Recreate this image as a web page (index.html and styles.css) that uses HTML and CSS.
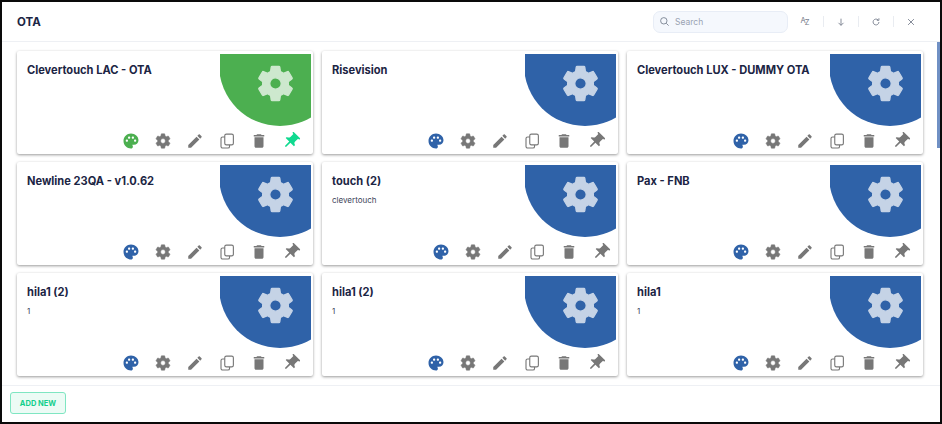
FILE: index.html
```html
<!DOCTYPE html>
<html lang="en">
<head>
  <meta charset="UTF-8" />
  <title>OTA</title>
  <link rel="stylesheet" href="styles.css">
</head>
<body>

<svg class="sprite" xmlns="http://www.w3.org/2000/svg">
  <symbol id="i-palette" viewBox="0 0 24 24"><path fill-rule="evenodd" d="M12 2C6.49 2 2 6.49 2 12s4.49 10 10 10c1.38 0 2.5-1.12 2.5-2.5 0-.61-.23-1.2-.64-1.67-.08-.1-.13-.21-.13-.33 0-.28.22-.5.5-.5H16c3.31 0 6-2.69 6-6 0-4.96-4.49-9-10-9zm5.5 11c-.83 0-1.5-.67-1.5-1.5s.67-1.5 1.5-1.5 1.5.67 1.5 1.5-.67 1.5-1.5 1.5zm-3-4c-.83 0-1.5-.67-1.5-1.5S13.67 6 14.5 6s1.5.67 1.5 1.5S15.33 9 14.5 9zM5 11.5c0-.83.67-1.5 1.5-1.5s1.5.67 1.5 1.5S7.33 13 6.5 13 5 12.33 5 11.5zm6-4c0 .83-.67 1.5-1.5 1.5S8 8.33 8 7.5 8.67 6 9.5 6s1.5.67 1.5 1.5z"/></symbol>
  <symbol id="i-gear" viewBox="0 0 24 24"><path stroke="currentColor" stroke-width=".7" stroke-linejoin="round" d="M19.14 12.94c.04-.3.06-.61.06-.94 0-.32-.02-.64-.07-.94l2.03-1.58c.18-.14.23-.41.12-.61l-1.92-3.32c-.12-.22-.37-.29-.59-.22l-2.39.96c-.5-.38-1.03-.7-1.62-.94l-.36-2.54c-.04-.24-.24-.41-.48-.41h-3.84c-.24 0-.43.17-.47.41l-.36 2.54c-.59.24-1.13.57-1.62.94l-2.39-.96c-.22-.08-.47 0-.59.22L2.74 8.87c-.12.21-.08.47.12.61l2.03 1.58c-.05.3-.09.63-.09.94s.02.64.07.94l-2.03 1.58c-.18.14-.23.41-.12.61l1.92 3.32c.12.22.37.29.59.22l2.39-.96c.5.38 1.03.7 1.62.94l.36 2.54c.05.24.24.41.48.41h3.84c.24 0 .44-.17.47-.41l.36-2.54c.59-.24 1.13-.56 1.62-.94l2.39.96c.22.08.47 0 .59-.22l1.92-3.32c.12-.22.07-.47-.12-.61l-2.01-1.58zM12 15.2a3.2 3.2 0 1 1 0-6.4 3.2 3.2 0 0 1 0 6.4z"/></symbol>
  <symbol id="i-edit" viewBox="0 0 24 24"><path d="M3 17.25V21h3.75L17.81 9.94l-3.75-3.75L3 17.25zM20.71 7.04c.39-.39.39-1.02 0-1.41l-2.34-2.34c-.39-.39-1.02-.39-1.41 0l-1.83 1.83 3.75 3.75 1.83-1.83z"/></symbol>
  <symbol id="i-copy" viewBox="0 0 24 24"><g fill="none" stroke="currentColor" stroke-width="1.5"><rect x="9" y="2.8" width="11.5" height="14.4" rx="2.2"/><path d="M9 6.6H6.2a2.2 2.2 0 0 0-2.2 2.2v10.4a2.2 2.2 0 0 0 2.2 2.2h7a2.2 2.2 0 0 0 2.2-2.2v-2"/></g></symbol>
  <symbol id="i-trash" viewBox="0 0 24 24"><path d="M6 19c0 1.1.9 2 2 2h8c1.1 0 2-.9 2-2V7H6v12zM19 4h-3.5l-1-1h-5l-1 1H5v2h14V4z"/></symbol>
  <symbol id="i-pin" viewBox="0 0 24 24"><path transform="rotate(45 12 12)" d="M16 9V4h1c.55 0 1-.45 1-1s-.45-1-1-1H7c-.55 0-1 .45-1 1s.45 1 1 1h1v5c0 1.66-1.34 3-3 3v2h5.97v7l1 1 1-1v-7H19v-2c-1.66 0-3-1.34-3-3z"/></symbol>
</svg>

<div class="window">
  <header class="topbar">
    <h1>OTA</h1>
    <div class="search">
      <svg viewBox="0 0 24 24" fill="none" stroke="currentColor" stroke-width="1.8"><circle cx="10.5" cy="10.5" r="7"/><path d="M16 16l5 5"/></svg>
      <span>Search</span>
    </div>
    <div class="tools">
      <span class="tool sort-az"><b>A</b><i>Z</i></span>
      <span class="tool"><svg viewBox="0 0 24 24" fill="none" stroke="currentColor" stroke-width="2"><path d="M12 4v16M6 14l6 6 6-6"/></svg></span>
      <span class="tool"><svg viewBox="0 0 24 24" fill="none" stroke="currentColor" stroke-width="2"><path d="M19 12a7 7 0 1 1-2.2-5.1M19 3v5h-5"/></svg></span>
      <span class="tool"><svg viewBox="0 0 24 24" fill="none" stroke="currentColor" stroke-width="2"><path d="M5 5l14 14M19 5L5 19"/></svg></span>
    </div>
  </header>

  <main class="list">
    <div class="scroll-thumb"></div>
    <div class="grid">

      <article class="card green">
        <h2>Clevertouch LAC - OTA</h2>
        <div class="corner"><svg><use href="#i-gear"/></svg></div>
        <div class="actions">
          <svg class="palette"><use href="#i-palette"/></svg>
          <svg><use href="#i-gear"/></svg>
          <svg><use href="#i-edit"/></svg>
          <svg><use href="#i-copy"/></svg>
          <svg><use href="#i-trash"/></svg>
          <svg class="pin pinned"><use href="#i-pin"/></svg>
        </div>
      </article>

      <article class="card">
        <h2>Risevision</h2>
        <div class="corner"><svg><use href="#i-gear"/></svg></div>
        <div class="actions">
          <svg class="palette"><use href="#i-palette"/></svg>
          <svg><use href="#i-gear"/></svg>
          <svg><use href="#i-edit"/></svg>
          <svg><use href="#i-copy"/></svg>
          <svg><use href="#i-trash"/></svg>
          <svg class="pin"><use href="#i-pin"/></svg>
        </div>
      </article>

      <article class="card">
        <h2>Clevertouch LUX - DUMMY OTA</h2>
        <div class="corner"><svg><use href="#i-gear"/></svg></div>
        <div class="actions">
          <svg class="palette"><use href="#i-palette"/></svg>
          <svg><use href="#i-gear"/></svg>
          <svg><use href="#i-edit"/></svg>
          <svg><use href="#i-copy"/></svg>
          <svg><use href="#i-trash"/></svg>
          <svg class="pin"><use href="#i-pin"/></svg>
        </div>
      </article>

      <article class="card">
        <h2>Newline 23QA - v1.0.62</h2>
        <div class="corner"><svg><use href="#i-gear"/></svg></div>
        <div class="actions">
          <svg class="palette"><use href="#i-palette"/></svg>
          <svg><use href="#i-gear"/></svg>
          <svg><use href="#i-edit"/></svg>
          <svg><use href="#i-copy"/></svg>
          <svg><use href="#i-trash"/></svg>
          <svg class="pin"><use href="#i-pin"/></svg>
        </div>
      </article>

      <article class="card">
        <h2>touch (2)</h2>
        <p>clevertouch</p>
        <div class="corner"><svg><use href="#i-gear"/></svg></div>
        <div class="actions shifted">
          <svg class="palette"><use href="#i-palette"/></svg>
          <svg><use href="#i-gear"/></svg>
          <svg><use href="#i-edit"/></svg>
          <svg><use href="#i-copy"/></svg>
          <svg><use href="#i-trash"/></svg>
          <svg class="pin"><use href="#i-pin"/></svg>
        </div>
      </article>

      <article class="card">
        <h2>Pax - FNB</h2>
        <div class="corner"><svg><use href="#i-gear"/></svg></div>
        <div class="actions">
          <svg class="palette"><use href="#i-palette"/></svg>
          <svg><use href="#i-gear"/></svg>
          <svg><use href="#i-edit"/></svg>
          <svg><use href="#i-copy"/></svg>
          <svg><use href="#i-trash"/></svg>
          <svg class="pin"><use href="#i-pin"/></svg>
        </div>
      </article>

      <article class="card">
        <h2>hila1 (2)</h2>
        <p>1</p>
        <div class="corner"><svg><use href="#i-gear"/></svg></div>
        <div class="actions">
          <svg class="palette"><use href="#i-palette"/></svg>
          <svg><use href="#i-gear"/></svg>
          <svg><use href="#i-edit"/></svg>
          <svg><use href="#i-copy"/></svg>
          <svg><use href="#i-trash"/></svg>
          <svg class="pin"><use href="#i-pin"/></svg>
        </div>
      </article>

      <article class="card">
        <h2>hila1 (2)</h2>
        <p>1</p>
        <div class="corner"><svg><use href="#i-gear"/></svg></div>
        <div class="actions">
          <svg class="palette"><use href="#i-palette"/></svg>
          <svg><use href="#i-gear"/></svg>
          <svg><use href="#i-edit"/></svg>
          <svg><use href="#i-copy"/></svg>
          <svg><use href="#i-trash"/></svg>
          <svg class="pin"><use href="#i-pin"/></svg>
        </div>
      </article>

      <article class="card">
        <h2>hila1</h2>
        <p>1</p>
        <div class="corner"><svg><use href="#i-gear"/></svg></div>
        <div class="actions">
          <svg class="palette"><use href="#i-palette"/></svg>
          <svg><use href="#i-gear"/></svg>
          <svg><use href="#i-edit"/></svg>
          <svg><use href="#i-copy"/></svg>
          <svg><use href="#i-trash"/></svg>
          <svg class="pin"><use href="#i-pin"/></svg>
        </div>
      </article>

    </div>
  </main>

  <footer class="bottombar">
    <button class="add-new">ADD NEW</button>
  </footer>
</div>

</body>
</html>
```

FILE: styles.css
```css
* {
  box-sizing: border-box;
}
html, body {
  height: 100%;
}
body {
  margin: 0;
  background: #fff;
  color: #1c2544;
  font-family: Inter, "Liberation Sans", sans-serif;
  overflow: hidden;
}
.sprite {
  display: none;
}
.window {
  display: flex;
  flex-direction: column;
  height: 424px;
  width: 942px;
  border: 2px solid #0a0a0a;
  background: #fff;
}

/* top bar */
.topbar {
  display: flex;
  align-items: center;
  height: 40px;
  flex: none;
  padding: 0 12px 0 15px;
  border-bottom: 1px solid #eef0f4;
}
.topbar h1 {
  margin: 0;
  font-size: 11.5px;
  font-weight: 700;
}
.search {
  display: flex;
  align-items: center;
  gap: 5px;
  width: 135px;
  height: 22px;
  margin-left: auto;
  padding-left: 5px;
  background: #f5f8fd;
  border: 1px solid #e8edf6;
  border-radius: 7px;
  color: #9aa3b3;
  font-size: 8.5px;
}
.search svg {
  width: 11px;
  height: 11px;
  color: #6f7888;
}
.tools {
  display: flex;
}
.tool {
  display: flex;
  align-items: center;
  justify-content: center;
  width: 35px;
  height: 11px;
  color: #6f7685;
  font-size: 7.5px;
  border-left: 1px solid #e9ecf1;
}
.tool:first-child {
  border-left: none;
}
.tool svg {
  width: 10px;
  height: 10px;
}
.sort-az b {
  font-weight: 400;
  position: relative;
  top: -1px;
}
.sort-az i {
  font-style: normal;
  position: relative;
  top: 1px;
  left: -1px;
}

/* card list */
.list {
  position: relative;
  flex: 1;
  overflow: hidden;
  padding: 9px 0 0 15px;
}
.scroll-thumb {
  position: absolute;
  top: 0;
  right: 0;
  width: 3px;
  height: 106px;
  background: #7090c4;
}
.grid {
  display: grid;
  grid-template-columns: repeat(3, 296px);
  grid-auto-rows: 103px;
  gap: 8px 9px;
}
.card {
  position: relative;
  padding: 12px 10px;
  background: #fff;
  border-radius: 2px;
  box-shadow: 0 1px 3px rgba(0, 0, 0, 0.4);
}
.card h2 {
  margin: 0;
  font-size: 11.1px;
  line-height: 14px;
  font-weight: 700;
}
.card p {
  margin: 7px 0 0;
  font-size: 8px;
  line-height: 11px;
  color: #3c4358;
}
.corner {
  position: absolute;
  top: 3px;
  right: 2px;
  width: 91px;
  height: 72px;
  overflow: hidden;
}
.corner::before {
  content: "";
  position: absolute;
  left: -1px;
  bottom: 0;
  width: 122px;
  height: 122px;
  border-radius: 50%;
  background: #2f62a8;
}
.green .corner::before {
  background: #4caf50;
}
.corner svg {
  position: absolute;
  left: 34px;
  top: 8px;
  width: 43px;
  height: 43px;
  color: #fff;
  fill: #fff;
  opacity: 0.72;
}
.actions {
  position: absolute;
  right: 13px;
  bottom: 4px;
  display: flex;
  align-items: center;
  gap: 14px;
  color: #777;
  fill: #777;
}
.actions.shifted {
  right: 8px;
}
.actions svg {
  width: 18px;
  height: 18px;
}
.actions .palette {
  fill: #2f62a8;
}
.green .actions .palette {
  fill: #4caf50;
}
.actions .pin {
  width: 20px;
  height: 20px;
  margin: -1px;
}
.actions .pinned {
  fill: #0fd98f;
}

/* bottom bar */
.bottombar {
  flex: none;
  height: 37px;
  padding: 6px 0 0 8px;
  background: #fff;
  border-top: 1px solid #eef0f4;
}
.add-new {
  display: block;
  width: 56px;
  height: 22px;
  padding: 0;
  background: #ecfbf5;
  border: 1px solid #7fe6c2;
  border-radius: 3px;
  color: #12cf8c;
  font-family: inherit;
  font-size: 7.5px;
  font-weight: 700;
}
```
